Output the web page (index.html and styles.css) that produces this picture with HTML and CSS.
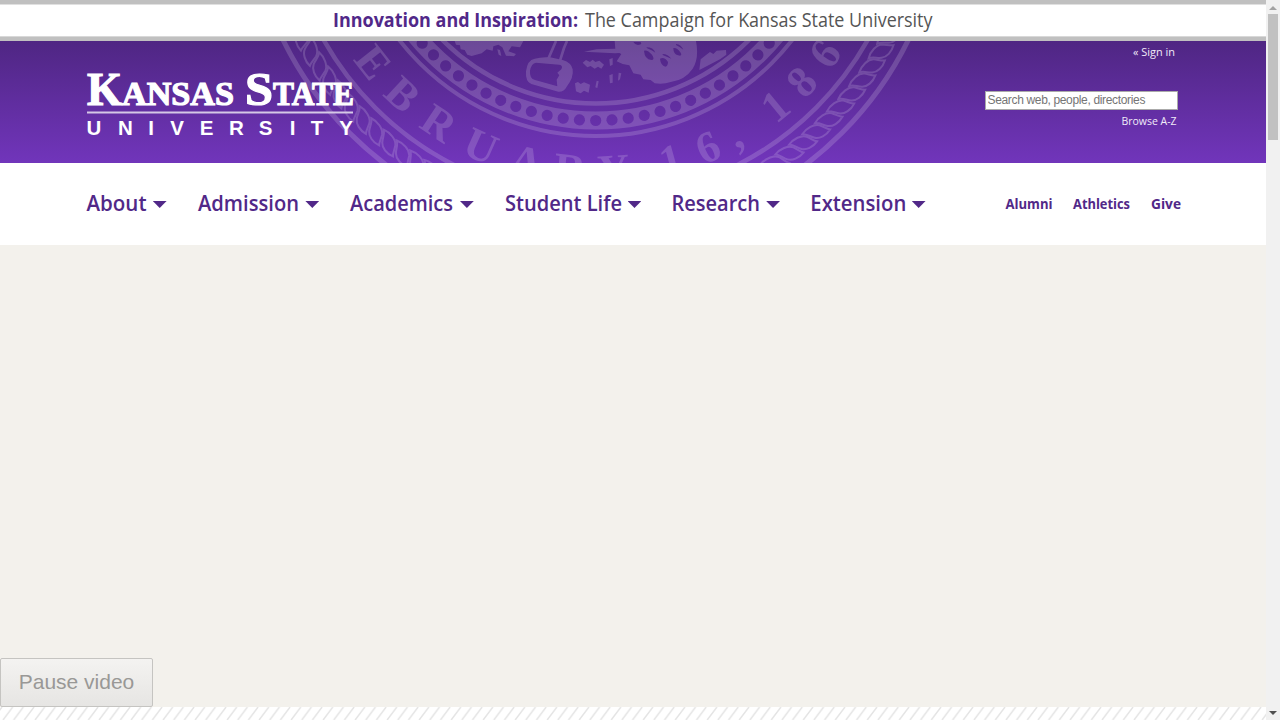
FILE: index.html
```html
<!DOCTYPE html>
<html lang="en">
<head>
<meta charset="utf-8">
<title>Kansas State University</title>
<link rel="stylesheet" href="styles.css">
</head>
<body>
<div class="page">
  <div class="campaign">
    <svg width="602" height="32" viewBox="0 0 602 32">
      <text class="campaign-strong" x="1" y="22" textLength="245" lengthAdjust="spacingAndGlyphs">Innovation and Inspiration:</text>
      <text class="campaign-text" x="253" y="22" textLength="347.500" lengthAdjust="spacingAndGlyphs">The Campaign for Kansas State University</text>
    </svg>
  </div>
  <header class="masthead">
    <svg class="seal" width="700" height="122" viewBox="246 41 700 122" aria-hidden="true">
      <defs>
        <mask id="beads" maskUnits="userSpaceOnUse" x="-260" y="-260" width="520" height="520">
          <rect x="-260" y="-260" width="520" height="520" fill="#fff"/>
          <g id="bead-holes" fill="#000"></g>
        </mask>
      </defs>
      <g transform="translate(595.7 -113)">
        <g fill="none" stroke="#fff">
          <circle r="348" stroke-width="5"/>
          <circle r="312" stroke-width="4.5"/>
          <circle r="249" stroke-width="4"/>
          <circle r="233.5" stroke-width="18" mask="url(#beads)"/>
          <circle r="216.5" stroke-width="4.5"/>
        </g>
        <g id="rope" fill="none" stroke="#fff" stroke-width="2"></g>
        <g class="seal-text">
          <text y="298" transform="rotate(51.8)">E</text>
          <text y="298" transform="rotate(43)">B</text>
          <text y="298" transform="rotate(33.600)">R</text>
          <text y="298" transform="rotate(23.9)">U</text>
          <text y="298" transform="rotate(14.2)">A</text>
          <text y="298" transform="rotate(5.2)">R</text>
          <text y="298" transform="rotate(-3.6)">Y</text>
          <text y="298" transform="rotate(-15.4)">1</text>
          <text y="298" transform="rotate(-23.3)">6</text>
          <text y="298" transform="rotate(-29.2)">,</text>
          <text y="298" transform="rotate(-39.3)">1</text>
          <text y="298" transform="rotate(-46.6)">8</text>
          <text y="298" transform="rotate(-54)">6</text>
        </g>
      </g>
      <g transform="translate(440 38) scale(.33333)" fill="#fff">
        <path d="M44 9H250L240 28 215 25 205 40 228 48 222 55 198 53 187 28 175 20 160 25 158 38 140 34 125 46 95 54 82 50 74 36 62 34 60 22 48 20Z"/>
        <path d="M172 34L180 36 184 54 176 50Z"/>
        <path d="M348 9L325 62M381 9L372 30 360 68" fill="none" stroke="#fff" stroke-width="8"/>
        <path d="M284 62Q262 66 258 100 256 132 274 138L355 161Q372 162 380 146 402 118 398 94 394 74 368 66L330 58Q305 56 284 62ZM288 74L358 80Q370 82 364 94L352 104 358 112 350 125 352 145 285 126Q268 122 270 98 274 76 288 74Z" fill-rule="evenodd"/>
        <path d="M405 136L414 132 422 138 432 133 450 140 446 164 432 158 422 166 408 160Z"/>
        <path d="M428 74L438 66 450 72 458 65 466 72 478 68 492 80 484 92 474 86 464 92 452 84 442 88Z"/>
        <path d="M432 41L470 34 526 32 524 9H560L550 44 525 46Z"/>
        <path d="M508 64L518 60V80L510 84ZM470 128L476 130 472 150 466 148ZM508 112L518 108V134L510 136ZM536 104L544 106 540 124 534 128Z"/>
        <path d="M535 9L540 28 532 42 544 48 530 70 548 78 568 82 580 106 602 110 610 124 632 126 644 136Q670 140 692 132 735 126 758 92 778 60 768 9ZM580 12Q588 26 604 18L602 12ZM612 38Q622 34 636 50 646 66 634 66 614 64 612 38ZM700 30Q712 28 722 44 728 56 714 52 700 48 700 30ZM660 62Q674 56 684 72 684 84 676 86 662 82 660 62ZM620 28Q640 28 646 44 642 40 620 30ZM668 48Q684 48 694 62 684 58 668 51ZM708 18Q724 20 730 35 722 28 708 21Z" fill-rule="evenodd"/>
        <path d="M778 96L782 64 802 48 810 42 820 48 830 38 858 36 859 50 840 64Z"/>
      </g>
    </svg>
    <a class="logo" href="#" aria-label="Kansas State University">
      <svg width="270" height="66" viewBox="86 71 270 66">
        <g class="logo-serif">
          <text x="87" y="104.500" font-size="46.500" textLength="35" lengthAdjust="spacingAndGlyphs">K</text>
          <text x="122" y="104.500" font-size="34" textLength="112" lengthAdjust="spacingAndGlyphs">ANSAS</text>
          <text x="245" y="104.500" font-size="46.500" textLength="28" lengthAdjust="spacingAndGlyphs">S</text>
          <text x="273" y="104.500" font-size="34" textLength="81" lengthAdjust="spacingAndGlyphs">TATE</text>
        </g>
        <rect x="87" y="111.500" width="266" height="2" fill="#d5c8e6"/>
        <text class="logo-sans" x="94 125.500 151 177 206.500 236.500 265.500 292.500 317 346" y="135">UNIVERSITY</text>
      </svg>
    </a>
    <div class="tools">
      <a class="signin" href="#"><svg width="44" height="16"><text x="2" y="12" textLength="42" lengthAdjust="spacingAndGlyphs">« Sign in</text></svg></a>
      <input class="search" type="text" placeholder="Search web, people, directories">
      <a class="browse" href="#"><svg width="58" height="16"><text x="1.500" y="12" textLength="55" lengthAdjust="spacingAndGlyphs">Browse A-Z</text></svg></a>
    </div>
  </header>
  <nav class="nav">
    <div class="nav-main">
      <a href="#"><svg width="61" height="32"><text x="0.500" y="23" textLength="60" lengthAdjust="spacingAndGlyphs">About</text></svg><i class="caret"></i></a>
      <a href="#"><svg width="102" height="32"><text x="0" y="23" textLength="101" lengthAdjust="spacingAndGlyphs">Admission</text></svg><i class="caret"></i></a>
      <a href="#"><svg width="104" height="32"><text x="0" y="23" textLength="103" lengthAdjust="spacingAndGlyphs">Academics</text></svg><i class="caret"></i></a>
      <a href="#"><svg width="117" height="32"><text x="0" y="23" textLength="117" lengthAdjust="spacingAndGlyphs">Student Life</text></svg><i class="caret"></i></a>
      <a href="#"><svg width="88" height="32"><text x="-0.500" y="23" textLength="88.500" lengthAdjust="spacingAndGlyphs">Research</text></svg><i class="caret"></i></a>
      <a href="#"><svg width="95" height="32"><text x="-0.700" y="23" textLength="96" lengthAdjust="spacingAndGlyphs">Extension</text></svg><i class="caret"></i></a>
    </div>
    <div class="nav-side">
      <a href="#"><svg width="47" height="24"><text x="0.500" y="17" textLength="47" lengthAdjust="spacingAndGlyphs">Alumni</text></svg></a>
      <a href="#"><svg width="57" height="24"><text x="0" y="17" textLength="57" lengthAdjust="spacingAndGlyphs">Athletics</text></svg></a>
      <a href="#"><svg width="30" height="24"><text x="0" y="17" textLength="30" lengthAdjust="spacingAndGlyphs">Give</text></svg></a>
    </div>
  </nav>
  <main class="hero"><button class="pause" type="button">Pause video</button></main>
  <svg class="stripes" width="1266" height="13" aria-hidden="true">
    <defs><pattern id="hatch" width="10.670" height="13" patternUnits="userSpaceOnUse"><path d="M-7.670 13L2 0M3 13L12.670 0" stroke="#e4e4e4" stroke-width="1.500"/></pattern></defs>
    <rect width="1266" height="13" fill="url(#hatch)"/>
  </svg>
</div>
<div class="scrollbar" aria-hidden="true">
  <i class="arrow-up"></i><i class="thumb"></i><i class="arrow-down"></i>
</div>
<script src="seal.js"></script>
</body>
</html>
```

FILE: styles.css
```css
* { box-sizing: border-box; }
body {
  margin: 0;
  height: 720px;
  overflow: hidden;
  display: flex;
  background: #fff;
  font-family: "Open Sans", "Noto Sans", sans-serif;
}
svg { display: block; overflow: visible; }
a { color: inherit; text-decoration: none; }
.page { width: 1266px; height: 720px; display: flex; flex-direction: column; }

.campaign {
  height: 41px;
  border-top: 4px solid #c0c0c0;
  border-bottom: 4px solid #c0c0c0;
  box-shadow: inset 0 1px #e0e0e0, inset 0 -1px #d8d8d8;
  display: flex;
  justify-content: center;
  align-items: center;
}
.campaign text { font-size: 19.5px; }
.campaign-strong { font-weight: 700; fill: #512888; }
.campaign-text { fill: #555; }

.masthead {
  position: relative;
  height: 122px;
  display: flex;
  justify-content: space-between;
  padding: 0 88px 0 86px;
  background: linear-gradient(#4f2683, #7135bb);
}
.seal { position: absolute; left: 246px; top: 0; overflow: hidden; opacity: .16; }
.seal-text {
  font: 700 44px "Liberation Serif", serif;
  fill: #fff;
  text-anchor: middle;
}
.logo { position: relative; padding-top: 30px; }
.logo-serif {
  font-family: "Liberation Serif", serif;
  font-weight: 700;
  fill: #fff;
  stroke: #fff;
  stroke-width: 1.2px;
}
.logo-sans {
  font: 700 20.5px "Liberation Sans", sans-serif;
  fill: #fff;
  text-anchor: middle;
}
.tools {
  position: relative;
  display: flex;
  flex-direction: column;
  align-items: flex-end;
  padding-top: 3px;
}
.tools text { font-size: 11.5px; fill: #f1ebf8; }
.signin { margin-right: 3px; }
.search {
  width: 193px;
  height: 19px;
  margin-top: 31px;
  padding: 0 1px 1px 1.5px;
  border: 1px solid #aaa;
  background: #fff;
  font: 12px "Liberation Sans", sans-serif;
  letter-spacing: -.34px;
}
.search::placeholder { color: #757575; }
.browse { margin: 3px 0 0; }

.nav {
  height: 82px;
  flex: none;
  display: flex;
  justify-content: space-between;
  align-items: center;
  padding: 0 85px 0 86px;
}
.nav-main { display: flex; gap: 31px; }
.nav-main a { display: flex; align-items: center; gap: 5.8px; }
.nav-main text { font-size: 22px; font-weight: 600; fill: #512888; }
.caret {
  width: 13.8px;
  height: 7px;
  margin-top: 1px;
  background: #512888;
  clip-path: polygon(0 0, 100% 0, 50% 100%);
}
.nav-side { display: flex; gap: 21px; }
.nav-side text { font-size: 14.5px; font-weight: 700; fill: #512888; }

.hero {
  height: 462px;
  flex: none;
  display: flex;
  align-items: flex-end;
  background: #f3f1ec;
}
.pause {
  width: 153px;
  height: 49px;
  padding: 0 0 2px;
  border: 1px solid #c5c4c1;
  border-radius: 2px;
  background: linear-gradient(#f4f3f1, #e6e5e3);
  color: #999896;
  font: 21px "Liberation Sans", sans-serif;
}
.stripes { flex: none; overflow: hidden; background: #fff; }

.scrollbar {
  width: 14px;
  height: 720px;
  display: flex;
  flex-direction: column;
  align-items: center;
  background: #f1f1f1;
}
.arrow-up, .arrow-down { width: 8px; height: 4px; flex: none; }
.arrow-up { margin: 6px 0 4px; background: #a3a3a3; clip-path: polygon(0 100%, 50% 0, 100% 100%); }
.arrow-down { margin: auto 0 5px; background: #505050; clip-path: polygon(0 0, 100% 0, 50% 100%); }
.thumb { width: 10px; height: 126px; background: #c1c1c1; }
```

FILE: seal.js
```js
const NS = "http://www.w3.org/2000/svg";
const add = (parent, tag, attrs) => {
  const el = document.createElementNS(NS, tag);
  for (const key in attrs) el.setAttribute(key, attrs[key]);
  parent.appendChild(el);
};
const holes = document.getElementById("bead-holes");
const rope = document.getElementById("rope");
for (let a = -64; a <= 64; a += 4) {
  add(holes, "circle", { cy: 233.5, r: 5.6, transform: `rotate(${a})` });
}
for (let a = -66; a <= 66; a += 3) {
  add(rope, "path", {
    d: "M-12 322C-5 320 4 322 7 327 9 331 10 335 12 337 5 339 -2 337 -5 333 -8 329 -8 325 -12 322Z",
    transform: `rotate(${a})`
  });
}
```
